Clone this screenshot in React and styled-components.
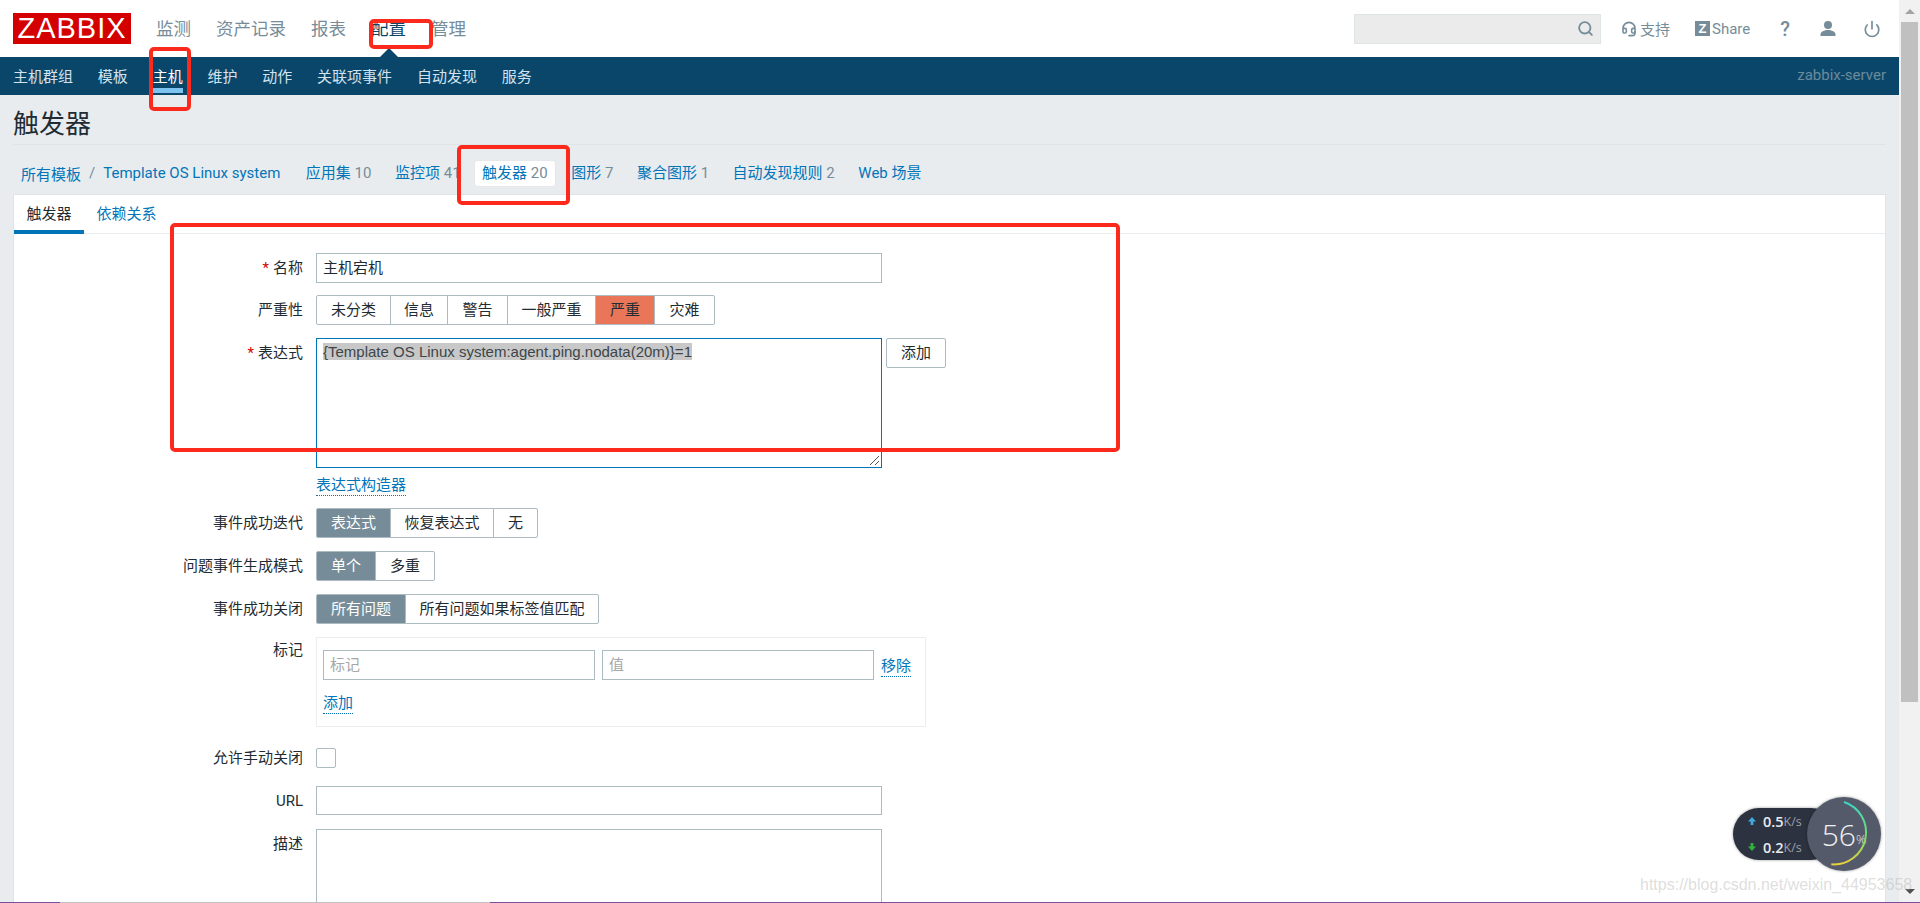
import React from "react";
import styled, { createGlobalStyle } from "styled-components";
import { Search, Headset, Power } from "lucide-react";

const GlobalStyle = createGlobalStyle`
  html, body { margin: 0; padding: 0; height: 100%; overflow: hidden; }
  body {
    background: #fff;
    font-family: Roboto, "Noto Sans CJK SC", sans-serif;
    font-size: 15px;
    color: #1f2c33;
  }
`;

const Page = styled.div`
  position: relative;
  display: flex;
  flex-direction: column;
  width: 1920px;
  height: 903px;
  overflow: hidden;
`;

const Body = styled.div`
  flex: 1;
  min-height: 0;
  display: flex;
`;

// one pixel strip of the window behind, along the bottom edge
const BottomEdge = styled.div`
  height: 1px;
  flex: none;
  background: linear-gradient(
    to right,
    #7b4f9e 0 60px,
    #c2c2c2 60px 490px,
    #7b4f9e 490px 100%
  );
`;

const Main = styled.div`
  flex: 1;
  min-width: 0;
  display: flex;
  flex-direction: column;
  background: #e9ecef;
`;

const TopBar = styled.header`
  height: 57px;
  flex: none;
  background: #fff;
  display: flex;
  align-items: center;
  padding: 0 13px;
`;

const Logo = styled.div`
  width: 118px;
  height: 31px;
  margin-right: 25px;
  background: #d40000;
  color: #fff;
  font-family: "Liberation Sans", sans-serif;
  font-size: 29px;
  line-height: 31px;
  text-align: center;
  letter-spacing: 1px;
`;

const TopNav = styled.nav`
  display: flex;
  gap: 25px;
  font-size: 17.5px;
`;

const TopNavItem = styled.a`
  position: relative;
  color: ${(p) => (p.$active ? "#0a466a" : "#768d99")};
  line-height: 24px;
  ${(p) =>
    p.$active &&
    `&::after {
      content: "";
      position: absolute;
      left: 9px;
      bottom: -16px;
      border: 9px solid transparent;
      border-top: 0;
      border-bottom-color: #0a466a;
    }`}
`;

const TopRight = styled.div`
  margin-left: auto;
  display: flex;
  align-items: center;
  color: #768d99;
`;

const SearchBox = styled.div`
  width: 247px;
  height: 30px;
  box-sizing: border-box;
  margin-right: 20px;
  padding-right: 6px;
  background: #ebebeb;
  border: 1px solid #dfe4e7;
  display: flex;
  align-items: center;
  justify-content: flex-end;
`;

const TopLink = styled.a`
  display: flex;
  align-items: center;
  gap: ${(p) => p.$inner || 3}px;
  margin-right: ${(p) => p.$gap}px;
`;

const ZBadge = styled.span`
  width: 15px;
  height: 15px;
  background: #768d99;
  color: #fff;
  font-family: "Liberation Sans", sans-serif;
  font-size: 13px;
  font-weight: 700;
  line-height: 15px;
  text-align: center;
`;

const HelpLabel = styled.span`
  font-size: 20px;
  font-weight: 500;
`;

const SubBar = styled.nav`
  height: 38px;
  flex: none;
  box-sizing: border-box;
  padding: 0 13px 2px;
  background: #0a466a;
  display: flex;
  align-items: center;
  gap: 24.8px;
`;

const SubItem = styled.a`
  position: relative;
  color: ${(p) => (p.$active ? "#fff" : "#d3e3ee")};
  ${(p) =>
    p.$active &&
    `&::after {
      content: "";
      position: absolute;
      left: 0;
      right: 0;
      bottom: -7px;
      height: 5px;
      background: #7fc4f0;
    }`}
`;

const ServerName = styled.span`
  margin-left: auto;
  color: #6b8b9c;
`;

const Content = styled.main`
  flex: 1;
  min-height: 0;
  padding: 0 13px;
`;

const TitleRow = styled.div`
  height: 50px;
  box-sizing: border-box;
  padding-top: 4px;
  border-bottom: 1px solid #dfe4e7;
  display: flex;
  align-items: center;
`;

const Title = styled.h1`
  margin: 0;
  font-size: 26px;
  font-weight: 400;
  color: #1f2c33;
`;

const Crumbs = styled.div`
  height: 49px;
  box-sizing: border-box;
  padding: 7px 0 0 8px;
  display: flex;
  align-items: center;
`;

const CrumbLink = styled.a`
  color: #0275b8;
`;

const CrumbSep = styled.span`
  margin: 0 8px;
  color: #768d99;
`;

const CrumbTab = styled.a`
  height: 25px;
  line-height: 25px;
  box-sizing: border-box;
  padding: 0 7.5px;
  margin-left: ${(p) => p.$gap}px;
  color: #0275b8;
  background: ${(p) => (p.$current ? "#fff" : "transparent")};
  border-radius: 2px;
  box-shadow: ${(p) => (p.$current ? "0 0 1px #c7ced3" : "none")};
  white-space: nowrap;
`;

const Count = styled.span`
  color: #768d99;
`;

const Card = styled.section`
  background: #fff;
  border: 1px solid #dfe4e7;
  border-bottom: 0;
  height: 720px;
`;

const Tabs = styled.div`
  display: flex;
  height: 38px;
  border-bottom: 1px solid #ebeef0;
`;

const Tab = styled.a`
  padding: 0 12.5px;
  line-height: 38px;
  height: 39px;
  box-sizing: border-box;
  color: ${(p) => (p.$active ? "#1f2c33" : "#0275b8")};
  border-bottom: ${(p) => (p.$active ? "4px solid #0275b8" : "none")};
`;

const Form = styled.div`
  display: grid;
  grid-template-columns: 289px 1fr;
  column-gap: 13px;
  row-gap: 13px;
  padding-top: 19px;
`;

const Label = styled.div`
  text-align: right;
  line-height: 30px;
  white-space: nowrap;
`;

const TagLabel = styled(Label)`
  line-height: 27px;
`;

const CheckLabel = styled(Label)`
  height: 33px;
  line-height: 36px;
`;

const SeverityLabel = styled(Label)`
  margin-top: -1px;
`;

const Star = styled.span`
  color: #d40000;
  margin-right: 4px;
`;

const Input = styled.div`
  box-sizing: border-box;
  width: ${(p) => p.$w || 566}px;
  height: ${(p) => p.$h || 30}px;
  padding: 0 6px;
  border: 1px solid #acbbc2;
  line-height: 28px;
  color: ${(p) => (p.$placeholder ? "#a7a7a7" : "#1f2c33")};
`;

const Segments = styled.div`
  display: flex;
  height: 30px;
`;

const SeveritySegments = styled(Segments)`
  margin-top: -1px;
`;

const Segment = styled.div`
  box-sizing: border-box;
  width: ${(p) => p.$w}px;
  height: 30px;
  line-height: 28px;
  text-align: center;
  white-space: nowrap;
  border: 1px solid #acbbc2;
  margin-left: -1px;
  color: ${(p) => (p.$on ? "#fff" : "#1f2c33")};
  background: ${(p) => (p.$on ? "#768d99" : "#fff")};
  &:first-child {
    margin-left: 0;
    border-radius: 2px 0 0 2px;
  }
  &:last-child {
    border-radius: 0 2px 2px 0;
  }
`;

const SevSegment = styled(Segment)`
  color: #1f2c33;
  background: #e97659;
`;

const ExprRow = styled.div`
  display: flex;
  align-items: flex-start;
  gap: 4px;
`;

const ExprBox = styled.div`
  position: relative;
  box-sizing: border-box;
  width: 566px;
  height: 130px;
  padding: 4px 6px;
  border: 1px solid #0275b8;
  line-height: 18px;
`;

const Selected = styled.span`
  background: #c8c8c8;
  color: #3c4548;
  font-family: "Liberation Sans", sans-serif;
`;

const Grip = styled.svg`
  position: absolute;
  right: 1px;
  bottom: 1px;
`;

const Btn = styled.div`
  box-sizing: border-box;
  width: 60px;
  height: 30px;
  line-height: 28px;
  text-align: center;
  border: 1px solid #acbbc2;
  border-radius: 2px;
`;

const DotLink = styled.a`
  display: inline-block;
  color: #0275b8;
  line-height: 20px;
  border-bottom: 1px dotted #0275b8;
`;

const LinkRow = styled.div`
  height: 21px;
  margin: -6px 0 -1px;
`;

const TagBox = styled.div`
  box-sizing: border-box;
  width: 610px;
  height: 90px;
  padding: 12px 6px;
  border: 1px solid #ebeef0;
`;

const TagRow = styled.div`
  display: flex;
  align-items: center;
  gap: 7px;
  margin-bottom: 13px;
  ${DotLink} {
    margin-top: 3px;
  }
`;

const Check = styled.div`
  box-sizing: border-box;
  width: 20px;
  height: 20px;
  border: 1px solid #acbbc2;
  border-radius: 2px;
`;

const CheckCell = styled.div`
  height: 20px;
  margin: 8px 0 5px;
`;

const Scrollbar = styled.aside`
  width: 21px;
  flex: none;
  background: #f1f1f1;
  display: flex;
  flex-direction: column;
  align-items: center;
`;

const ScrollArrow = styled.div`
  height: 22px;
  flex: none;
  display: flex;
  align-items: center;
  justify-content: center;
  &::before {
    content: "";
    border: 5px solid transparent;
    ${(p) => (p.$down ? "border-top: 5px solid #505050; border-bottom: 0;" : "border-bottom: 5px solid #a3a3a3; border-top: 0;")}
  }
`;

const ScrollThumb = styled.div`
  width: 17px;
  height: 680px;
  background: #c0c0c0;
`;

const ScrollGap = styled.div`
  flex: 1;
`;

// red marker rectangles drawn on top of the page
const Marker = styled.div`
  position: absolute;
  left: ${(p) => p.$x}px;
  top: ${(p) => p.$y}px;
  width: ${(p) => p.$w}px;
  height: ${(p) => p.$h}px;
  box-sizing: border-box;
  border: 4px solid #fb2a1c;
  border-radius: 5px;
`;

const Speed = styled.div`
  position: absolute;
  left: 1733px;
  top: 808px;
  width: 104px;
  height: 52px;
  box-sizing: border-box;
  padding-left: 14px;
  border-radius: 26px;
  background: #2d3240;
  box-shadow: 0 0 3px rgba(0, 0, 0, 0.4);
  font-family: "Open Sans", sans-serif;
`;

const SpeedLine = styled.div`
  display: flex;
  align-items: center;
  height: 26px;
  gap: 6px;
  color: #e8eaee;
  font-size: 14.5px;
  font-weight: 600;
`;

const SpeedUnit = styled.span`
  margin-left: -6px;
  color: #99a0ac;
  font-size: 12.5px;
  font-weight: 400;
`;

const Gauge = styled.div`
  position: absolute;
  left: 1807px;
  top: 797px;
  width: 74px;
  height: 74px;
  border-radius: 50%;
  background: #545a69;
  box-shadow: 0 0 3px rgba(0, 0, 0, 0.4);
  color: #f0f1f3;
  display: flex;
  align-items: center;
  justify-content: center;
  font-family: "Open Sans", sans-serif;
  font-size: 30px;
  font-weight: 300;
`;

const GaugeRing = styled.svg`
  position: absolute;
  left: 0;
  top: 0;
`;

const GaugePct = styled.span`
  font-size: 13px;
  margin-top: 10px;
`;

const Watermark = styled.div`
  position: absolute;
  left: 1640px;
  top: 873px;
  color: rgba(170, 170, 170, 0.4);
  font-family: "Liberation Sans", sans-serif;
  font-size: 16px;
  line-height: 24px;
  white-space: nowrap;
`;

const topNav = ["监测", "资产记录", "报表", "配置", "管理"];
const subNav = ["主机群组", "模板", "主机", "维护", "动作", "关联项事件", "自动发现", "服务"];
const crumbTabs = [
  ["应用集", "10", 18],
  ["监控项", "41", 8.5],
  ["触发器", "20", 6.5],
  ["图形", "7", 8.5],
  ["聚合图形", "1", 8.5],
  ["自动发现规则", "2", 8.5],
  ["Web 场景", "", 8.5],
];
const severities = [
  ["未分类", 75],
  ["信息", 58],
  ["警告", 61],
  ["一般严重", 89],
  ["严重", 60],
  ["灾难", 61],
];

function SegmentGroup({ items }) {
  return (
    <Segments>
      {items.map(([text, w], i) => (
        <Segment key={text} $w={w} $on={i === 0}>
          {text}
        </Segment>
      ))}
    </Segments>
  );
}

function UserIcon() {
  return (
    <svg width="16" height="15" viewBox="0 0 16 15" fill="#768d99">
      <circle cx="8" cy="4" r="4" />
      <path d="M0.5 15 V13.5 C0.5 10.5 4.5 9 8 9 S15.5 10.5 15.5 13.5 V15 Z" />
    </svg>
  );
}

export default function App() {
  return (
    <>
      <GlobalStyle />
      <Page>
        <Body>
          <Main>
            <TopBar>
              <Logo>ZABBIX</Logo>
              <TopNav>
                {topNav.map((t) => (
                  <TopNavItem key={t} $active={t === "配置"}>
                    {t}
                  </TopNavItem>
                ))}
              </TopNav>
              <TopRight>
                <SearchBox>
                  <Search size={17} strokeWidth={2.6} />
                </SearchBox>
                <TopLink $gap={25}>
                  <Headset size={16} strokeWidth={2.4} />
                  支持
                </TopLink>
                <TopLink $gap={30} $inner={2}>
                  <ZBadge>Z</ZBadge>
                  Share
                </TopLink>
                <TopLink $gap={30}>
                  <HelpLabel>?</HelpLabel>
                </TopLink>
                <TopLink $gap={27}>
                  <UserIcon />
                </TopLink>
                <TopLink $gap={5}>
                  <Power size={18} strokeWidth={2.2} />
                </TopLink>
              </TopRight>
            </TopBar>
            <SubBar>
              {subNav.map((t) => (
                <SubItem key={t} $active={t === "主机"}>
                  {t}
                </SubItem>
              ))}
              <ServerName>zabbix-server</ServerName>
            </SubBar>
            <Content>
              <TitleRow>
                <Title>触发器</Title>
              </TitleRow>
              <Crumbs>
                <CrumbLink>所有模板</CrumbLink>
                <CrumbSep>/</CrumbSep>
                <CrumbLink>Template OS Linux system</CrumbLink>
                {crumbTabs.map(([t, n, gap]) => (
                  <CrumbTab key={t} $gap={gap} $current={t === "触发器"}>
                    {t} <Count>{n}</Count>
                  </CrumbTab>
                ))}
              </Crumbs>
              <Card>
                <Tabs>
                  <Tab $active>触发器</Tab>
                  <Tab>依赖关系</Tab>
                </Tabs>
                <Form>
                  <Label>
                    <Star>*</Star>名称
                  </Label>
                  <Input>主机宕机</Input>

                  <SeverityLabel>严重性</SeverityLabel>
                  <SeveritySegments>
                    {severities.map(([t, w]) =>
                      t === "严重" ? (
                        <SevSegment key={t} $w={w}>
                          {t}
                        </SevSegment>
                      ) : (
                        <Segment key={t} $w={w}>
                          {t}
                        </Segment>
                      )
                    )}
                  </SeveritySegments>

                  <Label>
                    <Star>*</Star>表达式
                  </Label>
                  <ExprRow>
                    <ExprBox>
                      <Selected>{"{Template OS Linux system:agent.ping.nodata(20m)}=1"}</Selected>
                      <Grip width="12" height="12" viewBox="0 0 12 12">
                        <path d="M2 11 L11 2 M7 11 L11 7" stroke="#555" strokeWidth="1" fill="none" />
                      </Grip>
                    </ExprBox>
                    <Btn>添加</Btn>
                  </ExprRow>

                  <span />
                  <LinkRow>
                    <DotLink>表达式构造器</DotLink>
                  </LinkRow>

                  <Label>事件成功迭代</Label>
                  <SegmentGroup items={[["表达式", 75], ["恢复表达式", 104], ["无", 45]]} />

                  <Label>问题事件生成模式</Label>
                  <SegmentGroup items={[["单个", 60], ["多重", 60]]} />

                  <Label>事件成功关闭</Label>
                  <SegmentGroup items={[["所有问题", 90], ["所有问题如果标签值匹配", 194]]} />

                  <TagLabel>标记</TagLabel>
                  <TagBox>
                    <TagRow>
                      <Input $w={272} $placeholder>标记</Input>
                      <Input $w={272} $placeholder>值</Input>
                      <DotLink>移除</DotLink>
                    </TagRow>
                    <DotLink>添加</DotLink>
                  </TagBox>

                  <CheckLabel>允许手动关闭</CheckLabel>
                  <CheckCell>
                    <Check />
                  </CheckCell>

                  <Label>URL</Label>
                  <Input $h={29} />

                  <Label>描述</Label>
                  <Input $h={130} />
                </Form>
              </Card>
            </Content>
          </Main>
          <Scrollbar>
            <ScrollArrow />
            <ScrollThumb />
            <ScrollGap />
            <ScrollArrow $down />
          </Scrollbar>
        </Body>
        <BottomEdge />

        <Marker $x={369} $y={19} $w={64} $h={30} />
        <Marker $x={149} $y={47} $w={42} $h={64} />
        <Marker $x={457} $y={145} $w={113} $h={60} />
        <Marker $x={170} $y={223} $w={950} $h={229} />

        <Speed>
          <SpeedLine>
            <svg width="10" height="10" viewBox="0 0 10 10">
              <path d="M5 1 L9 5.5 H6.4 V9 H3.6 V5.5 H1 Z" fill="#3fa9e0" />
            </svg>
            0.5<SpeedUnit>K/s</SpeedUnit>
          </SpeedLine>
          <SpeedLine>
            <svg width="10" height="10" viewBox="0 0 10 10">
              <path d="M5 9 L9 4.5 H6.4 V1 H3.6 V4.5 H1 Z" fill="#2fb43a" />
            </svg>
            0.2<SpeedUnit>K/s</SpeedUnit>
          </SpeedLine>
        </Speed>
        <Gauge>
          <GaugeRing width="74" height="74" viewBox="0 0 74 74">
            <defs>
              <linearGradient id="ring" x1="0" y1="0" x2="0" y2="1">
                <stop offset="0" stopColor="#3ad6c4" />
                <stop offset="0.6" stopColor="#7fd66a" />
                <stop offset="1" stopColor="#e8d23a" />
              </linearGradient>
            </defs>
            <path d="M37 5 A32 32 0 0 1 24.3 67.3" fill="none" stroke="url(#ring)" strokeWidth="2" />
          </GaugeRing>
          56<GaugePct>%</GaugePct>
        </Gauge>
        <Watermark>https://blog.csdn.net/weixin_44953658</Watermark>
      </Page>
    </>
  );
}
